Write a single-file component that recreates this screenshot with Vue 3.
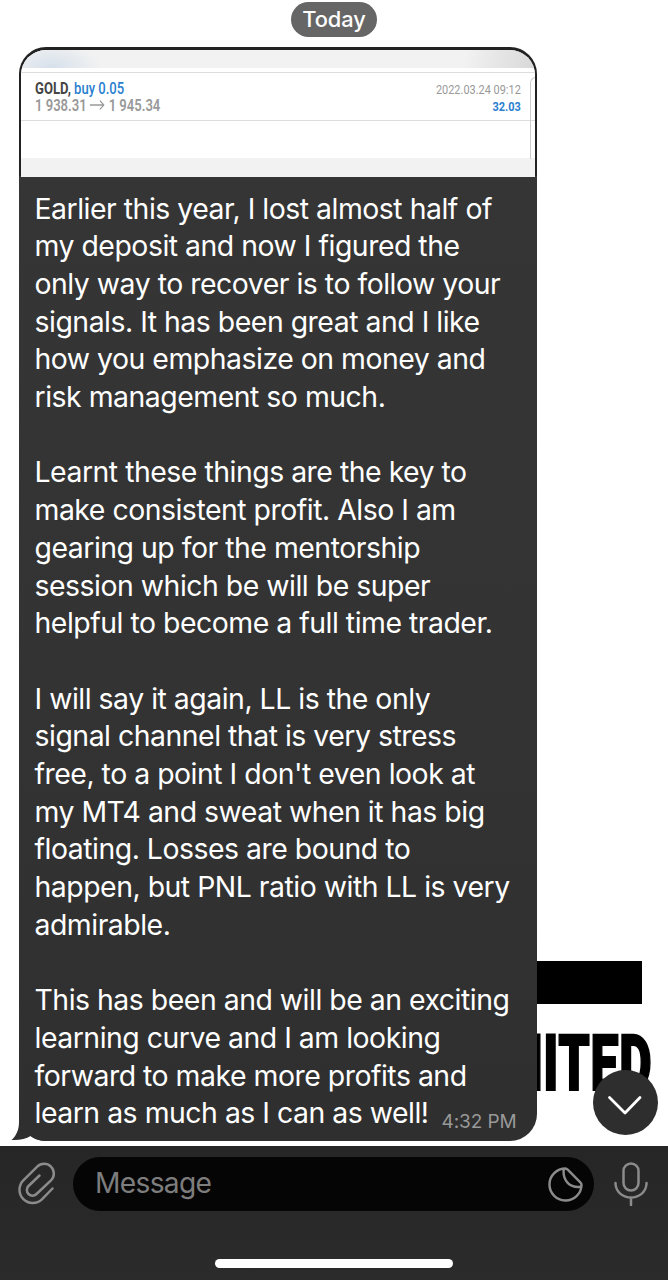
<template>
  <div class="screen">
    <main class="chat">
      <div class="wallpaper">
        <div class="wallpaper-bar"></div>
        <div class="wallpaper-word">LIMITED</div>
      </div>

      <div class="date-row">
        <span class="date">Today</span>
      </div>

      <article class="bubble">
        <div class="photo">
          <div class="photo-blur"></div>
          <div class="trade">
            <div class="trade-left">
              <div class="symbol"><b>GOLD,</b> <span>buy 0.05</span></div>
              <div class="prices">
                1 938.31
                <svg viewBox="0 0 19 10" class="arrow"><path d="M0.5 5H17.5M13 1l4.500 4l-4.500 4" /></svg>
                1 945.34
              </div>
            </div>
            <div class="trade-right">
              <div class="time">2022.03.24 09:12</div>
              <div class="profit">32.03</div>
            </div>
          </div>
          <div class="photo-empty"></div>
          <div class="photo-edge"></div>
        </div>

        <div class="message">
          <p v-for="(paragraph, pIndex) in paragraphs" :key="`p-${pIndex}`">
            <span
              v-for="(line, index) in paragraph"
              :key="`line-${pIndex}-${index}`"
              class="line"
            >{{ line }}</span>
          </p>
        </div>
        <time class="sent">4:32 PM</time>
        <svg class="tail" viewBox="0 0 40 32">
          <path d="M8 0V13C8 21 5 27 0.5 31C8 31.500 15 30 19.500 27C24 30.500 29 32 36 32V0Z" />
        </svg>
      </article>

      <button class="scroll-down" aria-label="Scroll down">
        <svg viewBox="0 0 65 65"><path d="M16.500 27.500L32 43L47 27.500" /></svg>
      </button>
    </main>

    <footer class="composer">
      <div class="composer-row">
        <svg class="clip" viewBox="0 0 38 44">
          <path d="M21.500 13.500L10.500 24A5.500 5.500 0 0 0 18.500 32L33 18.300A9.700 9.700 0 0 0 19.200 4.600L5.100 18.600A13.300 13.300 0 0 0 23.900 37.400L34.500 26.500" />
        </svg>
        <div class="field">
          <input v-model="draft" type="text" placeholder="Message">
          <svg class="sticker" viewBox="0 0 36 36">
            <path d="M18 1.500A16.500 16.500 0 1 0 34.500 18.500Q34.500 17 33 15.500L20.500 3Q19 1.500 18 1.500Q16 1.500 16 5C16 14 22 21 32 20.500Q34.500 20.500 34.500 18.500" />
          </svg>
        </div>
        <svg class="mic" viewBox="0 0 34 44">
          <rect x="9.500" y="1.500" width="15" height="27" rx="7.500" />
          <path d="M1.500 21V22C3 40 31 40 32.500 22V21M17 35.500V43" />
        </svg>
      </div>
      <div class="home-indicator"></div>
    </footer>
  </div>
</template>

<script setup>
import { ref } from 'vue';

const draft = ref('');

const paragraphs = [
  [
    'Earlier this year, I lost almost half of',
    'my deposit and now I figured the',
    'only way to recover is to follow your',
    'signals. It has been great and I like',
    'how you emphasize on money and',
    'risk management so much.'
  ],
  [
    'Learnt these things are the key to',
    'make consistent profit. Also I am',
    'gearing up for the mentorship',
    'session which be will be super',
    'helpful to become a full time trader.'
  ],
  [
    'I will say it again, LL is the only',
    'signal channel that is very stress',
    "free, to a point I don't even look at",
    'my MT4 and sweat when it has big',
    'floating. Losses are bound to',
    'happen, but PNL ratio with LL is very',
    'admirable.'
  ],
  [
    'This has been and will be an exciting',
    'learning curve and I am looking',
    'forward to make more profits and',
    'learn as much as I can as well!'
  ]
];
</script>

<style>
body {
  margin: 0;
  background: #fff;
}
</style>

<style scoped>
.screen {
  display: flex;
  flex-direction: column;
  width: 668px;
  height: 1280px;
  overflow: hidden;
  font-family: Inter, "Liberation Sans", sans-serif;
  background: #fff;
}

svg {
  display: block;
  fill: none;
  stroke-linecap: round;
  stroke-linejoin: round;
}

.chat {
  position: relative;
  flex: none;
  height: 1146px;
  box-sizing: border-box;
  padding-top: 2px;
}

.wallpaper {
  position: absolute;
  right: 16px;
  top: 961px;
  display: flex;
  flex-direction: column;
  align-items: flex-end;
}

.wallpaper-bar {
  width: 200px;
  height: 43px;
  margin-right: 10px;
  background: #000;
}

.wallpaper-word {
  height: 56px;
  margin-top: 32px;
  font: 900 77px/56px Roboto, sans-serif;
  letter-spacing: 1px;
  color: #000;
  -webkit-text-stroke: 2px #000;
  transform: scaleX(0.65);
  transform-origin: right;
}

.date-row {
  display: flex;
  justify-content: center;
}

.date {
  height: 35px;
  padding: 0 11.5px;
  border-radius: 18px;
  background: #666;
  color: #fff;
  font-size: 21.8px;
  font-weight: 500;
  line-height: 35px;
}

.bubble {
  position: relative;
  isolation: isolate;
  width: 518px;
  height: 1094px;
  box-sizing: border-box;
  margin: 10px 0 0 18.5px;
  padding: 2.5px 2px 0;
  border-radius: 27px;
  background: linear-gradient(#222 129px, #353535 129px, #333 60%, #2f2f2f 100%);
}

.photo {
  position: relative;
  height: 127px;
  overflow: hidden;
  border-radius: 25px 25px 0 0;
  background: #f2f2f2;
}

.photo-blur {
  height: 18px;
  background:
    radial-gradient(ellipse 50px 26px at 30px 18px, #d6e0eb, transparent),
    linear-gradient(100deg, #f2f2f2 86%, #d8d8d8);
  border-bottom: 4px solid #fff;
}

.trade {
  display: flex;
  justify-content: space-between;
  height: 47px;
  padding: 0 14px;
  border-top: 1px solid #ddd;
  border-bottom: 1px solid #ddd;
  background: #fff;
  font-family: Roboto, sans-serif;
  font-size: 16px;
  line-height: 17px;
  white-space: nowrap;
}

.trade-left {
  padding-top: 7px;
  transform: scaleX(0.815);
  transform-origin: left;
}

.symbol {
  color: #2a7fd0;
}

.symbol span {
  font-weight: 500;
}

.symbol b {
  color: #444;
}

.prices {
  display: flex;
  gap: 4px;
  align-items: center;
  color: #999;
  font-weight: 600;
}

.arrow {
  width: 19px;
  height: 10px;
  stroke: #999;
  stroke-width: 1.3;
}

.trade-right {
  padding-top: 8px;
  font-size: 13.5px;
  text-align: right;
  transform: scaleX(0.81);
  transform-origin: right;
}

.time {
  color: #999;
}

.profit {
  color: #2a7fd0;
  font-weight: 700;
}

.photo-empty {
  height: 37px;
  background: #fff;
}

.photo-edge {
  position: absolute;
  top: 27px;
  right: -5px;
  width: 9px;
  height: 81px;
  border: solid #ccc;
  border-width: 1px 0 0 1px;
  border-radius: 6px 0 0 0;
}

.message {
  display: flex;
  flex-direction: column;
  gap: 37.7px;
  padding: 13px 0 0 14px;
  color: #fff;
  font-size: 28.4px;
  letter-spacing: -0.48px;
  line-height: 37.7px;
  white-space: nowrap;
}

.message p {
  margin: 0;
}

.line {
  display: block;
}

.sent {
  position: absolute;
  right: 20px;
  bottom: 7.5px;
  color: #999;
  font-size: 19px;
  letter-spacing: -0.1px;
  line-height: 24px;
}

.tail {
  position: absolute;
  z-index: -1;
  left: -8px;
  bottom: 0;
  width: 40px;
  height: 32px;
  fill: #2f2f2f;
}

.scroll-down {
  position: absolute;
  right: 10px;
  bottom: 11px;
  width: 65px;
  height: 65px;
  padding: 0;
  border: 0;
  border-radius: 50%;
  background: #2e2e2e;
}

.scroll-down svg {
  stroke: #fff;
  stroke-width: 2.8;
}

.composer {
  display: flex;
  flex: 1;
  flex-direction: column;
  align-items: center;
  justify-content: space-between;
  box-sizing: border-box;
  padding: 11px 20px 12px 18px;
  background: linear-gradient(#262626, #2b2b2b);
}

.composer-row {
  display: flex;
  align-items: center;
  width: 100%;
}

.clip {
  width: 38px;
  height: 44px;
  margin-right: 17px;
  stroke: #8b8b8b;
  stroke-width: 2.5;
}

.field {
  display: flex;
  flex: 1;
  align-items: center;
  box-sizing: border-box;
  height: 54px;
  min-width: 0;
  padding: 0 11px 0 22px;
  border-radius: 27px;
  background: #050505;
}

.field input {
  flex: 1;
  min-width: 0;
  padding: 0 0 2px;
  border: 0;
  outline: 0;
  background: none;
  color: #fff;
  font: 28.2px Inter, sans-serif;
  letter-spacing: -0.7px;
}

.field input::placeholder {
  color: #7d7d7d;
  opacity: 1;
}

.sticker {
  width: 35px;
  height: 35px;
  stroke: #8b8b8b;
  stroke-width: 2.5;
}

.mic {
  width: 34px;
  height: 44px;
  margin-left: 20px;
  stroke: #8b8b8b;
  stroke-width: 2.5;
}

.home-indicator {
  width: 238px;
  height: 9px;
  margin-left: 2px;
  border-radius: 5px;
  background: #fff;
}
</style>
